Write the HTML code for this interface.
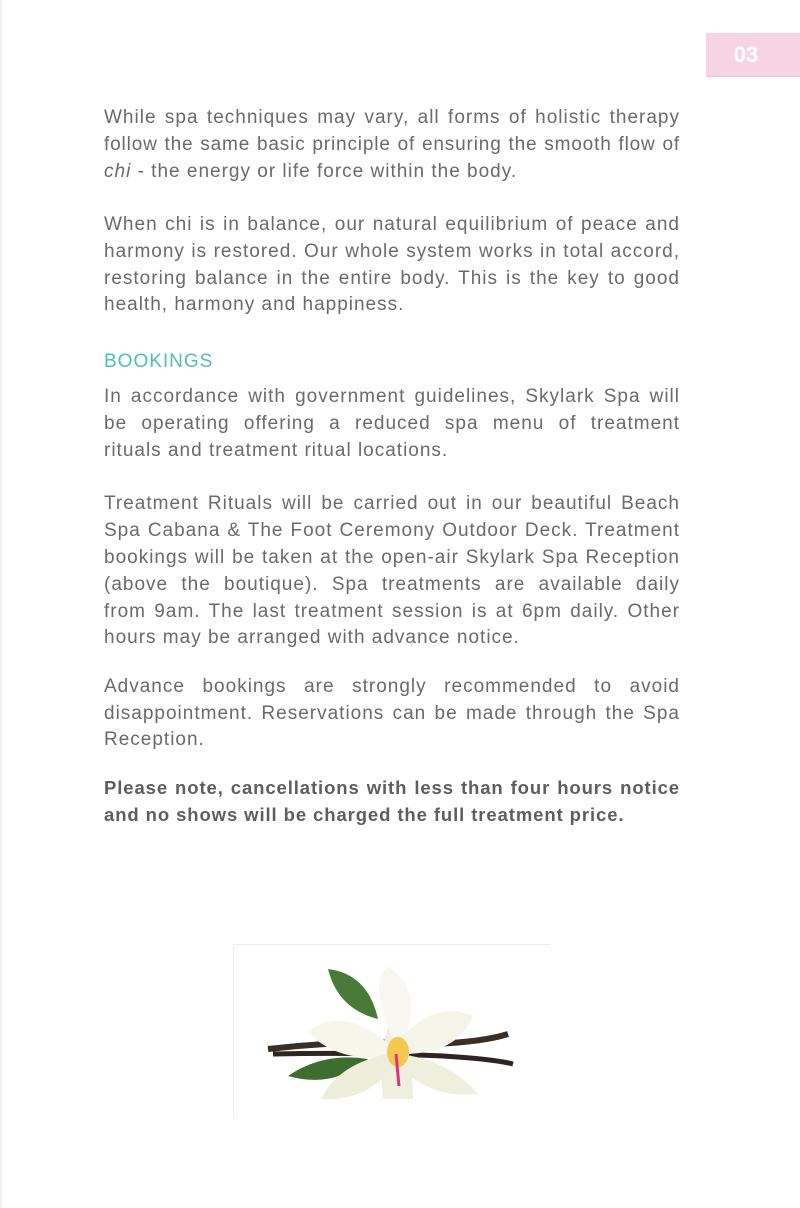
<!DOCTYPE html>
<html><head><meta charset="utf-8"><style>
body{margin:0;width:800px;height:1208px;background:#fff;position:relative;overflow:hidden;font-family:"Liberation Sans",sans-serif}
.l{position:absolute;left:104px;width:576px;font-size:19px;line-height:26px;color:#6a6a6a;text-align:justify;text-align-last:justify;white-space:nowrap;letter-spacing:1px}
.n{text-align-last:left}
.b{font-weight:bold;color:#5e5e5e;font-size:18.5px;letter-spacing:0.9px}
.edge{position:absolute;left:0;top:0;width:2px;height:1208px;background:#f1f1f1}
</style></head><body>
<div class="edge"></div>
<div style="position:absolute;left:706px;top:33px;width:94px;height:43px;background:#f7d4e1;border-bottom:1px solid #e8c6d3"></div>
<div style="position:absolute;left:706px;top:33px;width:80px;height:43px;line-height:43px;text-align:center;color:#fff;font-weight:bold;font-size:22px">03</div>

<div class="l" style="top:105px">While spa techniques may vary, all forms of holistic therapy</div>
<div class="l" style="top:132px;letter-spacing:0.85px">follow the same basic principle of ensuring the smooth flow of</div>
<div class="l n" style="top:159px"><i>chi</i> - the energy or life force within the body.</div>

<div class="l" style="top:212px">When chi is in balance, our natural equilibrium of peace and</div>
<div class="l" style="top:239px">harmony is restored. Our whole system works in total accord,</div>
<div class="l" style="top:266px">restoring balance in the entire body. This is the key to good</div>
<div class="l n" style="top:292px">health, harmony and happiness.</div>

<div class="l n" style="top:349px;color:#4fbdb8;font-size:19px;letter-spacing:1px">BOOKINGS</div>
<div class="l" style="top:384px">In accordance with government guidelines, Skylark Spa will</div>
<div class="l" style="top:411px">be operating offering a reduced spa menu of treatment</div>
<div class="l n" style="top:438px">rituals and treatment ritual locations.</div>

<div class="l" style="top:491px">Treatment Rituals will be carried out in our beautiful Beach</div>
<div class="l" style="top:518px">Spa Cabana &amp; The Foot Ceremony Outdoor Deck. Treatment</div>
<div class="l" style="top:545px">bookings will be taken at the open-air Skylark Spa Reception</div>
<div class="l" style="top:572px">(above the boutique). Spa treatments are available daily</div>
<div class="l" style="top:599px">from 9am. The last treatment session is at 6pm daily. Other</div>
<div class="l n" style="top:625px">hours may be arranged with advance notice.</div>

<div class="l" style="top:674px">Advance bookings are strongly recommended to avoid</div>
<div class="l" style="top:701px">disappointment. Reservations can be made through the Spa</div>
<div class="l n" style="top:727px">Reception.</div>

<div class="l b" style="top:775px">Please note, cancellations with less than four hours notice</div>
<div class="l b n" style="top:802px">and no shows will be charged the full treatment price.</div>

<svg style="position:absolute;left:233px;top:944px" width="317" height="175" viewBox="0 0 317 175">
<line x1="0" y1="0.5" x2="317" y2="0.5" stroke="#eee"/>
<line x1="0.5" y1="0" x2="0.5" y2="175" stroke="#f3f3f3"/>
<path d="M35 105 Q120 95 200 100 Q250 98 275 90" stroke="#3a2e28" stroke-width="6" fill="none"/>
<path d="M40 110 Q130 108 210 112 Q260 115 280 120" stroke="#2e2420" stroke-width="5" fill="none"/>
<path d="M95 25 Q135 30 145 75 Q105 65 95 25Z" fill="#4a7a3a"/>
<path d="M55 132 Q90 108 135 115 Q100 145 55 132Z" fill="#3d6e30"/>
<path d="M150 155 Q145 100 160 70 Q180 100 180 155Z" fill="#efefe0"/>
<path d="M160 95 Q135 40 155 22 Q190 45 172 95Z" fill="#f8f8f0"/>
<path d="M165 98 Q200 55 240 72 Q225 110 170 110Z" fill="#f5f4e8"/>
<path d="M158 102 Q110 60 75 88 Q105 120 160 112Z" fill="#f6f6ea"/>
<path d="M165 110 Q215 115 245 150 Q195 155 165 120Z" fill="#efefdd"/>
<path d="M155 110 Q105 120 88 155 Q135 158 162 120Z" fill="#eeeedb"/>
<ellipse cx="165" cy="108" rx="11" ry="15" fill="#f2c94c"/>
<path d="M163 110 L166 142" stroke="#e0337a" stroke-width="3"/>
</svg>
</body></html>
